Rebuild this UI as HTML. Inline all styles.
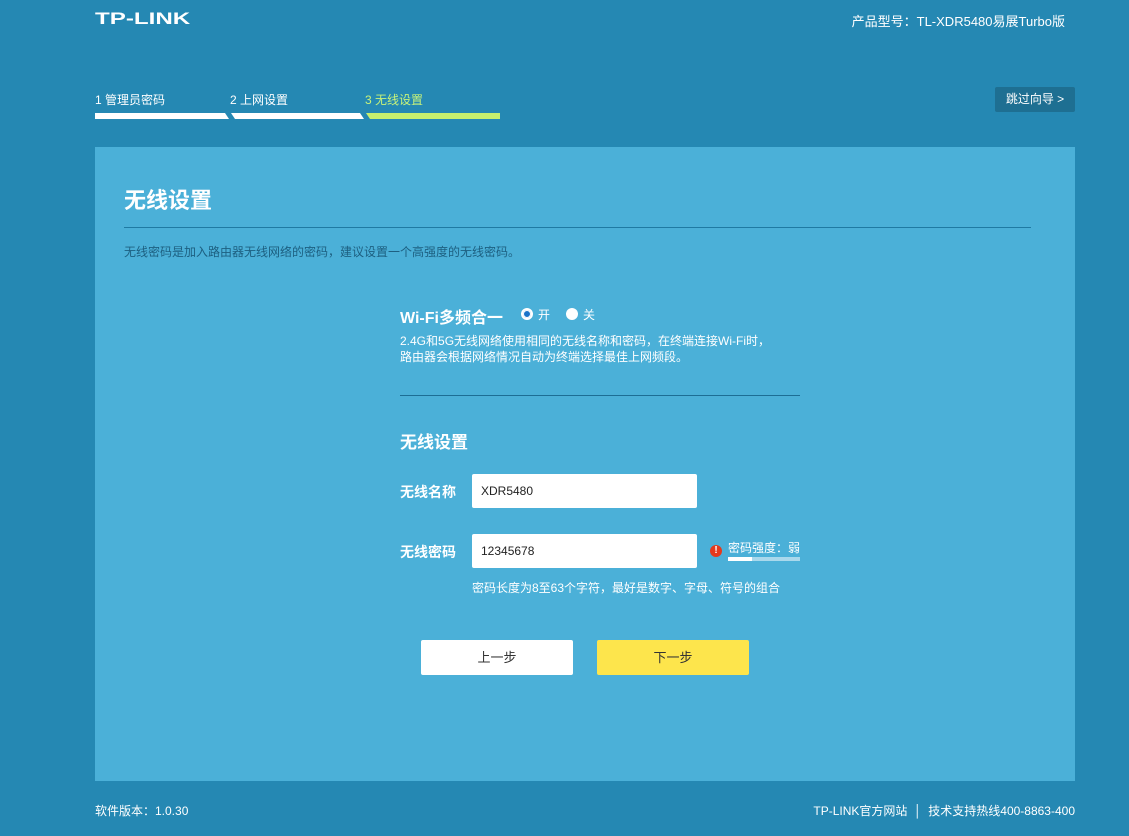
<!DOCTYPE html>
<html><head><meta charset="utf-8"><style>
*{margin:0;padding:0;box-sizing:border-box}
body{width:1129px;height:836px;background:#2588b3;font-family:"Liberation Sans","Noto Sans CJK SC",sans-serif;color:#fff;position:relative;overflow:hidden;font-size:12px}
.a{position:absolute}
.logo{left:95px;top:9px;font-size:17px;font-weight:bold;font-family:"Liberation Sans",sans-serif;transform:scaleX(1.42);transform-origin:left top}
.model{right:64px;top:11px;font-size:13px}
.step{top:91px;font-size:12px}
.skip{left:995px;top:87px;width:80px;height:25px;background:#1e6f92;border-radius:2px;font-size:12px;line-height:25px;text-align:center}
.panel{left:95px;top:147px;width:980px;height:634px;background:#4bb0d8}
h1{position:absolute;left:124px;top:183px;font-size:22px;font-weight:bold}
.hr1{left:124px;top:227px;width:907px;height:1px;background:#1f7aa3}
.desc{left:124px;top:243px;font-size:12px;color:#1d5f80}
.input{background:#fff;border-radius:2px;color:#222;font-size:12px;padding-left:9px;line-height:34px;width:225px;height:34px}
.lab{font-size:14px;font-weight:bold}
.btn{top:640px;width:152px;height:35px;border-radius:2px;line-height:35px;text-align:center;font-size:13px;color:#333}
.radio{position:absolute;width:12px;height:12px;border-radius:50%;background:#fff}
</style></head><body>
<div class="a logo">TP-LINK</div>
<div class="a model">产品型号：TL-XDR5480易展Turbo版</div>
<div class="a step" style="left:95px">1 管理员密码</div>
<div class="a step" style="left:230px">2 上网设置</div>
<div class="a step" style="left:365px;color:#c8f37a">3 无线设置</div>
<svg class="a" style="left:95px;top:113px" width="405" height="6"><polygon points="0,0 130,0 134,6 0,6" fill="#fff"/><polygon points="136,0 265,0 269,6 140,6" fill="#fff"/><polygon points="271,0 405,0 405,6 275,6" fill="#c7ef6e"/></svg>
<div class="a skip">跳过向导 &gt;</div>
<div class="a panel"></div>
<h1>无线设置</h1>
<div class="a hr1"></div>
<div class="a desc">无线密码是加入路由器无线网络的密码，建议设置一个高强度的无线密码。</div>
<div class="a" style="left:400px;top:304px;font-size:16px;font-weight:bold">Wi-Fi多频合一</div>
<div class="radio" style="left:521px;top:308px;border:2px solid #fff;background:#1a73c9;box-shadow:inset 0 0 0 1px #fff"></div>
<div class="a" style="left:538px;top:306px;font-size:12px">开</div>
<div class="radio" style="left:566px;top:308px"></div>
<div class="a" style="left:583px;top:306px;font-size:12px">关</div>
<div class="a" style="left:400px;top:333px;font-size:12px;line-height:16px">2.4G和5G无线网络使用相同的无线名称和密码，在终端连接Wi-Fi时，<br>路由器会根据网络情况自动为终端选择最佳上网频段。</div>
<div class="a" style="left:400px;top:395px;width:400px;height:1px;background:#1d6e95"></div>
<div class="a" style="left:400px;top:428px;font-size:17px;font-weight:bold">无线设置</div>
<div class="a lab" style="left:400px;top:482px">无线名称</div>
<div class="a input" style="left:472px;top:474px">XDR5480</div>
<div class="a lab" style="left:400px;top:542px">无线密码</div>
<div class="a input" style="left:472px;top:534px">12345678</div>
<div class="a" style="left:710px;top:545px;width:12px;height:12px;border-radius:50%;background:#e5391c;font-size:10px;font-weight:bold;text-align:center;line-height:12px">!</div>
<div class="a" style="left:728px;top:539px;font-size:12px">密码强度：弱</div>
<div class="a" style="left:728px;top:557px;width:72px;height:4px;background:#a9d8ec"><div style="width:24px;height:4px;background:#fff"></div></div>
<div class="a" style="left:472px;top:579px;font-size:12px">密码长度为8至63个字符，最好是数字、字母、符号的组合</div>
<div class="a btn" style="left:421px;background:#fff">上一步</div>
<div class="a btn" style="left:597px;background:#fde54c">下一步</div>
<div class="a" style="left:95px;top:802px;font-size:12px">软件版本：1.0.30</div>
<div class="a" style="right:54px;top:802px;font-size:12px">TP-LINK官方网站 &nbsp;│&nbsp; 技术支持热线400-8863-400</div>
</body></html>
